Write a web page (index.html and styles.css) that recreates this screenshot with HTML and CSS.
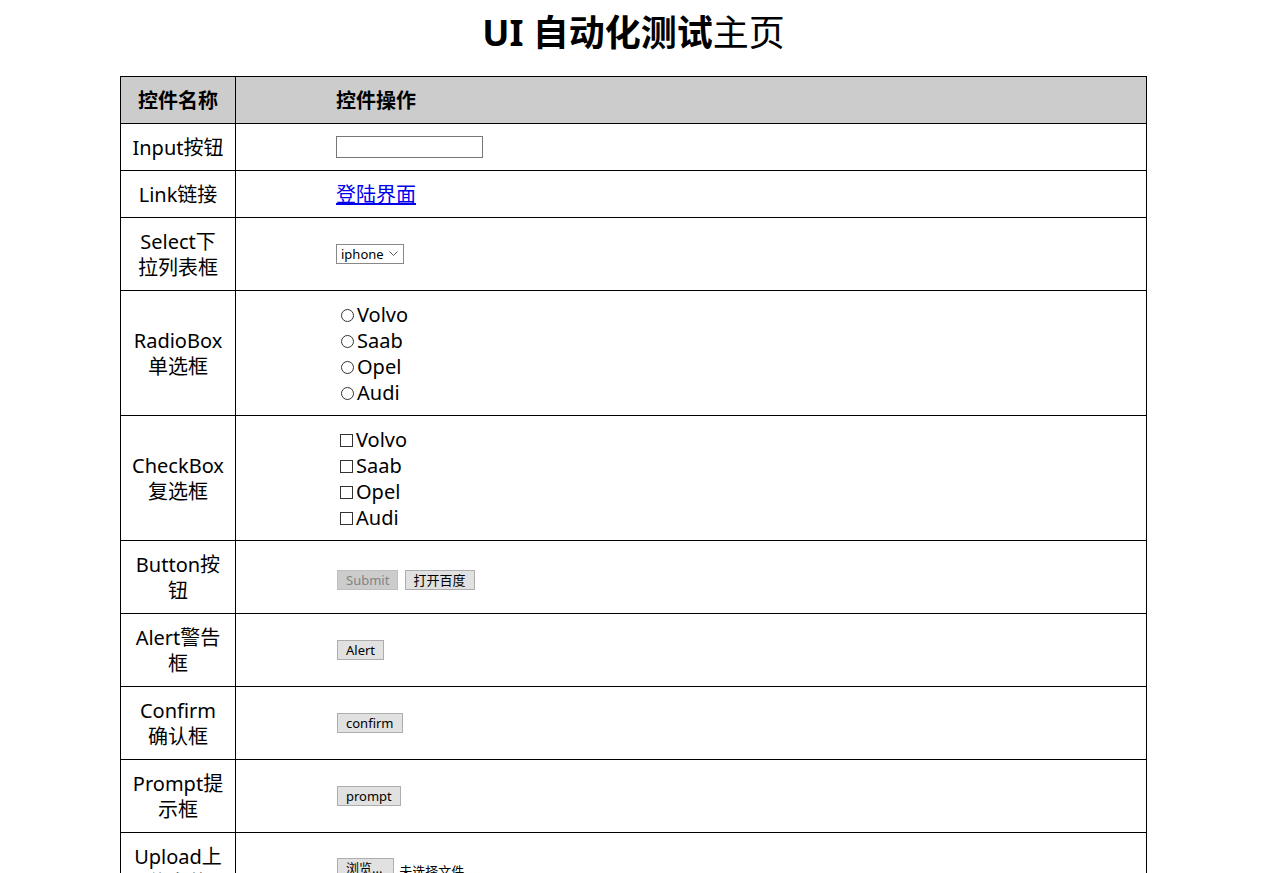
FILE: index.html
```html
<!DOCTYPE html>
<html lang="zh-CN">
<head>
<meta charset="utf-8">
<title>UI 自动化测试主页</title>
<link rel="stylesheet" href="styles.css">
</head>
<body>
<div class="page">
  <h1 class="title"><b>UI 自动化测试</b>主页</h1>
  <table class="grid">
    <thead>
      <tr><th class="name">控件名称</th><th class="op">控件操作</th></tr>
    </thead>
    <tbody>
      <tr><td class="name">Input按钮</td><td class="op"><input class="text-input" type="text"></td></tr>
      <tr><td class="name">Link链接</td><td class="op"><a class="link" href="#">登陆界面</a></td></tr>
      <tr><td class="name">Select下拉列表框</td><td class="op">
        <span class="select-wrap"><select class="select"><option>iphone</option><option>huawei</option><option>xiaomi</option></select><svg class="chev" width="9" height="6" viewBox="0 0 9 6"><path d="M0.5 0.5 L4.5 4.5 L8.5 0.5" fill="none" stroke="#555" stroke-width="1"/></svg></span>
      </td></tr>
      <tr><td class="name">RadioBox单选框</td><td class="op">
        <label class="opt"><input class="radio" type="radio" name="car">Volvo</label><br>
        <label class="opt"><input class="radio" type="radio" name="car">Saab</label><br>
        <label class="opt"><input class="radio" type="radio" name="car">Opel</label><br>
        <label class="opt"><input class="radio" type="radio" name="car">Audi</label>
      </td></tr>
      <tr><td class="name">CheckBox复选框</td><td class="op">
        <label class="opt"><input class="check" type="checkbox">Volvo</label><br>
        <label class="opt"><input class="check" type="checkbox">Saab</label><br>
        <label class="opt"><input class="check" type="checkbox">Opel</label><br>
        <label class="opt"><input class="check" type="checkbox">Audi</label>
      </td></tr>
      <tr><td class="name">Button按钮</td><td class="op"><button class="btn" disabled>Submit</button> <button class="btn">打开百度</button></td></tr>
      <tr><td class="name">Alert警告框</td><td class="op"><button class="btn solo">Alert</button></td></tr>
      <tr><td class="name">Confirm确认框</td><td class="op"><button class="btn solo">confirm</button></td></tr>
      <tr><td class="name">Prompt提示框</td><td class="op"><button class="btn solo">prompt</button></td></tr>
      <tr><td class="name">Upload上传文件</td><td class="op"><button class="btn solo browse">浏览...</button> <span class="file-note">未选择文件</span></td></tr>
    </tbody>
  </table>
</div>
</body>
</html>
```
FILE: styles.css
```css
html, body {
  margin: 0;
  padding: 0;
  background: #fff;
}
body {
  font-family: "Noto Sans", "Noto Sans CJK SC", sans-serif;
  color: #000;
}
.page {
  width: 1267px;
  padding-bottom: 40px;
}
.title {
  margin: 10px 0 20px;
  font-size: 36px;
  line-height: 46px;
  font-weight: normal;
  text-align: center;
}
.title b {
  font-weight: bold;
}
.grid {
  width: 1027px;
  margin: 0 auto;
  border-collapse: collapse;
  table-layout: fixed;
  font-size: 20px;
  line-height: 26px;
}
.grid th, .grid td {
  border: 1px solid #000;
  padding: 11px 10px 9px;
  vertical-align: middle;
}
.grid th {
  background: #ccc;
  font-weight: bold;
}
.grid .name {
  width: 94px;
  text-align: center;
}
.grid .op {
  text-align: left;
  padding-left: 100px;
}
.text-input {
  box-sizing: border-box;
  width: 147px;
  height: 22px;
  border: 1px solid #777;
  padding: 0 2px;
  margin: 0;
  vertical-align: middle;
  position: relative;
  top: -3px;
  font-size: 13px;
}
.link {
  color: #0000ee;
  text-decoration: underline;
}
.select-wrap {
  position: relative;
  top: -3px;
  display: inline-block;
  vertical-align: middle;
  line-height: 0;
}
.select {
  -webkit-appearance: none;
  appearance: none;
  box-sizing: border-box;
  width: 68px;
  height: 20px;
  border: 1px solid #888;
  border-radius: 0;
  background: #fff;
  padding: 0 0 0 4px;
  margin: 0;
  font-family: "Noto Sans", "Noto Sans CJK SC", sans-serif;
  font-size: 13px;
  line-height: 18px;
  color: #000;
}
.chev {
  position: absolute;
  right: 6px;
  top: 7px;
  pointer-events: none;
}
.opt {
  white-space: nowrap;
}
.radio, .check {
  -webkit-appearance: none;
  appearance: none;
  box-sizing: border-box;
  width: 13px;
  height: 13px;
  border: 1px solid #333;
  background: #fff;
  vertical-align: middle;
  position: relative;
  top: -1px;
}
.radio {
  border-radius: 50%;
  margin: 0 3px 0 5px;
}
.check {
  border-radius: 0;
  margin: 0 3px 0 4px;
}
.btn {
  box-sizing: border-box;
  height: 20px;
  padding: 0 8px;
  margin: 0 0 0 1px;
  border: 1px solid #adadad;
  background: #e1e1e1;
  color: #000;
  font-family: "Noto Sans", "Noto Sans CJK SC", sans-serif;
  font-size: 13px;
  line-height: 18px;
  border-radius: 0;
  vertical-align: baseline;
}
.btn.solo {
  vertical-align: 3px;
}
.btn[disabled] {
  background: #ccc;
  border-color: #bfbfbf;
  color: #838383;
}
.browse {
  width: 57px;
  text-align: left;
}
.file-note {
  font-size: 13px;
}
```
